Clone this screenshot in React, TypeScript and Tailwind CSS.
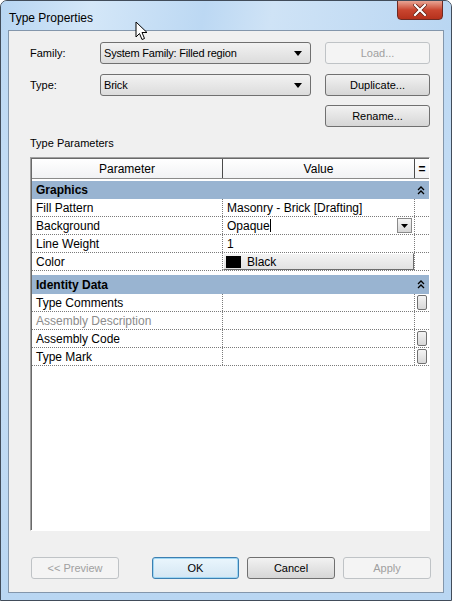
import React from 'react';

const font = { fontFamily: '"Liberation Sans", Arial, sans-serif' };

const Combo = ({ value }: { value: string }) => (
  <div className="w-[211px] h-[22px] border border-[#707070] rounded-[3px] bg-gradient-to-b from-[#f2f2f2] to-[#dcdcdc] flex items-center pl-[3px] pr-[8px]">
    <span className="flex-1 text-[11px] tracking-[-0.2px] text-black">{value}</span>
    <svg width="8" height="5" viewBox="0 0 8 5"><path d="M0 0h8L4 5z" fill="#000" /></svg>
  </div>
);

const Btn = ({ label, disabled, focus, w = 'w-[105px]' }: { label: string; disabled?: boolean; focus?: boolean; w?: string }) => (
  <div
    className={
      'h-[22px] rounded-[3px] flex items-center justify-center text-[11px] ' + w + ' ' +
      (disabled
        ? 'border border-[#bfc3c6] bg-[#f4f4f4] text-[#a0a0a0]'
        : focus
        ? 'border border-[#3c7fb1] bg-gradient-to-b from-[#eaf6fd] to-[#d4e6f3] text-black shadow-[inset_0_0_0_1px_#9ed6f3]'
        : 'border border-[#707070] bg-gradient-to-b from-[#f2f2f2] to-[#d6d6d6] text-black')
    }
  >
    {label}
  </div>
);

const Chevron = () => (
  <svg width="8" height="9" viewBox="0 0 8 9" className="mr-[4px]">
    <path d="M1 4L4 1L7 4M1 8L4 5L7 8" stroke="#000" strokeWidth="1.3" fill="none" />
  </svg>
);

const GroupRow = ({ label, h }: { label: string; h: string }) => (
  <div className={'flex items-center bg-[#99b4d1] text-[12px] font-bold text-black pl-[4px] ' + h}>
    <span className="flex-1">{label}</span>
    <Chevron />
  </div>
);

const DotRow = ({
  name,
  gray,
  children,
  extra,
}: {
  name: string;
  gray?: boolean;
  children?: React.ReactNode;
  extra?: React.ReactNode;
}) => (
  <div className="flex h-[18px] border-b border-dotted border-[#7a7a7a] text-[12px]">
    <div className={'w-[191px] pl-[4px] flex items-center border-r border-dotted border-[#7a7a7a] ' + (gray ? 'text-[#8c8c8c]' : 'text-black')}>
      {name}
    </div>
    <div className="w-[192px] flex items-center border-r border-dotted border-[#7a7a7a]">{children}</div>
    <div className="flex-1 flex items-center justify-center">{extra}</div>
  </div>
);

const MiniBtn = () => (
  <div className="w-[10px] h-[15px] border border-[#707070] rounded-[2px] bg-gradient-to-b from-[#f4f4f4] to-[#d8d8d8]" />
);

export default function App() {
  return (
    <div className="relative w-[452px] h-[601px] overflow-hidden rounded-t-[7px] border border-[#414c5a] bg-gradient-to-b from-[#bcd8f3] via-[#c6def5] to-[#b9d6f2] flex flex-col" style={font}>
      {/* title bar */}
      <div className="h-[29px] flex items-start relative bg-[linear-gradient(100deg,#b7d5f2_0%,#d4e7f8_20%,#bcd8f3_45%,#cfe3f6_60%,#b9d6f2_100%)]">
        <span className="ml-[8px] mt-[8px] text-[12px] text-black">Type Properties</span>
        <div className="absolute right-[8px] top-[-1px] w-[46px] h-[20px] rounded-b-[4px] border border-[#6d2a23] bg-gradient-to-b from-[#e8a494] via-[#c9452f] to-[#b5311c] flex items-center justify-center">
          <svg width="14" height="12" viewBox="0 0 14 12">
            <path d="M2 1L12 11M12 1L2 11" stroke="#5a1a10" strokeWidth="3.6" strokeLinecap="square" />
            <path d="M2 1L12 11M12 1L2 11" stroke="#fff" strokeWidth="2.2" strokeLinecap="square" />
          </svg>
        </div>
      </div>

      {/* client area */}
      <div className="mx-[7px] h-[563px] border border-[#8396ab] bg-[#f0f0f0] flex flex-col text-[11px] text-black">
        <div className="flex items-center mt-[11px] pl-[21px]">
          <span className="w-[70px]">Family:</span>
          <Combo value="System Family: Filled region" />
          <div className="ml-[14px]">
            <Btn label="Load..." disabled />
          </div>
        </div>
        <div className="flex items-center mt-[10px] pl-[21px]">
          <span className="w-[70px]">Type:</span>
          <Combo value="Brick" />
          <div className="ml-[14px]">
            <Btn label="Duplicate..." />
          </div>
        </div>
        <div className="flex mt-[9px] pl-[316px]">
          <Btn label="Rename..." />
        </div>
        <div className="mt-[9px] pl-[21px] leading-[14px]">Type Parameters</div>

        {/* property grid */}
        <div className="mt-[7px] ml-[21px] w-[400px] h-[374px] border border-t-[#a0a0a0] border-l-[#a0a0a0] border-r-white border-b-white">
          <div className="h-full border-t border-l border-[#696969] bg-white flex flex-col">
            <div className="flex h-[20px] border-b border-[#8a8a8a] bg-gradient-to-b from-white to-[#f1f2f4] text-[12px]">
              <div className="w-[191px] flex items-center justify-center border-r border-[#4a4a4a]">Parameter</div>
              <div className="w-[192px] flex items-center justify-center border-r border-[#4a4a4a]">Value</div>
              <div className="flex-1 flex items-center justify-center font-bold">=</div>
            </div>
            <div className="h-[2px]" />
            <GroupRow label="Graphics" h="h-[18px]" />
            <DotRow name="Fill Pattern">
              <span className="pl-[4px]">Masonry - Brick [Drafting]</span>
            </DotRow>
            <DotRow name="Background">
              <span className="pl-[4px] flex-1 flex items-center">
                Opaque<span className="inline-block w-px h-[13px] bg-black" />
              </span>
              <div className="mr-[2px] w-[15px] h-[15px] border border-[#8a8a8a] bg-gradient-to-b from-[#f6f6f6] to-[#d6d6d6] flex items-center justify-center">
                <svg width="7" height="4" viewBox="0 0 7 4"><path d="M0 0h7L3.5 4z" fill="#000" /></svg>
              </div>
            </DotRow>
            <DotRow name="Line Weight">
              <span className="pl-[4px]">1</span>
            </DotRow>
            <DotRow name="Color">
              <div className="w-full h-full border border-t-white border-l-white border-r-[#6d6d6d] border-b-[#6d6d6d] bg-gradient-to-b from-[#f4f4f4] to-[#e2e2e2] flex items-center">
                <span className="ml-[2px] w-[15px] h-[12px] bg-black" />
                <span className="ml-[6px]">Black</span>
              </div>
            </DotRow>
            <div className="h-[4px]" />
            <GroupRow label="Identity Data" h="h-[19px]" />
            <DotRow name="Type Comments" extra={<MiniBtn />} />
            <DotRow name="Assembly Description" gray />
            <DotRow name="Assembly Code" extra={<MiniBtn />} />
            <DotRow name="Type Mark" extra={<MiniBtn />} />
          </div>
        </div>

        <div className="mt-[26px] flex pl-[22px]">
          <Btn label="<< Preview" disabled w="w-[88px]" />
          <div className="ml-[33px]">
            <Btn label="OK" focus w="w-[87px]" />
          </div>
          <div className="ml-[8px]">
            <Btn label="Cancel" w="w-[88px]" />
          </div>
          <div className="ml-[8px]">
            <Btn label="Apply" disabled w="w-[88px]" />
          </div>
        </div>
      </div>

      {/* mouse cursor */}
      <svg className="absolute left-[134px] top-[20px]" width="13" height="20" viewBox="0 0 13 20">
        <path d="M1 1V16L4.5 12.5L7 18.5L9.5 17.5L7 11.5H12Z" fill="#fff" stroke="#000" strokeWidth="1" strokeLinejoin="round" />
      </svg>
    </div>
  );
}
